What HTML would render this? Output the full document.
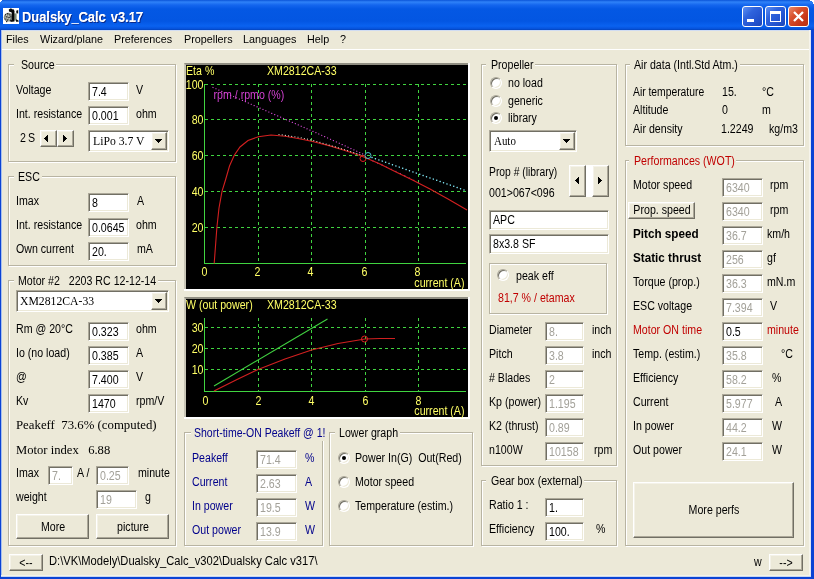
<!DOCTYPE html>
<html><head><meta charset="utf-8"><title>Dualsky_Calc v3.17</title>
<style>
html,body{margin:0;padding:0;font-family:"Liberation Sans",sans-serif}
body{width:814px;height:579px;overflow:hidden;background:#ece9d8;position:relative;font-family:"Liberation Sans",sans-serif}
#w{will-change:transform;position:absolute;left:0;top:0;width:814px;height:579px;overflow:hidden;background:#ece9d8}
.t{position:absolute;white-space:pre;transform-origin:0 0;font-size:12px;line-height:14px}
.s{font-family:"Liberation Sans",sans-serif}
.f{font-family:"Liberation Serif",serif}
.c{text-align:center;transform-origin:50% 0}
.in{position:absolute;box-sizing:border-box;background:#fff;border:1px solid;border-color:#aca899 #fff #fff #aca899;box-shadow:inset 1px 1px 0 #716f64,inset -1px -1px 0 #ece9d8}
.b{position:absolute;box-sizing:border-box;background:#ece9d8;border:1px solid;border-color:#fff #716f64 #716f64 #fff;box-shadow:inset -1px -1px 0 #aca899,inset 1px 1px 0 #f4f2e8}
.g{position:absolute;border:1px solid #b8b4a2;box-shadow:1px 1px 0 #fff,inset 1px 1px 0 #fff}
.gl{position:absolute;background:#ece9d8}
.r{position:absolute;width:12px;height:12px;border-radius:50%;background:#fff;box-sizing:border-box;border:1px solid;border-color:#aca899 #fff #fff #aca899;box-shadow:inset 1px 1px 0 #716f64,inset -1px -1px 0 #ece9d8}
.r i{position:absolute;left:3px;top:3px;width:4px;height:4px;border-radius:50%;background:#000}
.a{position:absolute}
svg{position:absolute;overflow:visible}
</style></head><body><div id="w">

<div style="position:absolute;left:0;top:0;width:814px;height:30px;background:linear-gradient(#0a54d8 0,#2f82f8 2px,#1466ee 5px,#0458e4 9px,#0356e2 21px,#0a62f0 26px,#0654de 28.5px,#0444bc 30px)"></div>
<div style="position:absolute;left:0;top:30px;width:814px;height:1px;background:#d0dcf2"></div>
<div style="position:absolute;left:0;top:31px;width:814px;height:18px;background:#ece9d8"></div>
<div style="position:absolute;left:0;top:49px;width:814px;height:1px;background:#fff"></div>

<svg style="left:3px;top:8px" width="16" height="16" viewBox="0 0 16 16"><rect width="16" height="16" fill="#fff"/>
<circle cx="5.3" cy="9.3" r="4.5" fill="#8d9288"/>
<g fill="#2c2c2c"><rect x="2" y="6" width="1.2" height="1.2"/><rect x="4" y="5" width="1.3" height="1.3"/><rect x="6.2" y="6.3" width="1.2" height="1.2"/><rect x="3" y="8.4" width="1.2" height="1.2"/><rect x="5.4" y="9" width="1.3" height="1.3"/><rect x="1.6" y="10.4" width="1.2" height="1.2"/><rect x="4" y="11.3" width="1.3" height="1.3"/><rect x="6.8" y="11.6" width="1.2" height="1.2"/><rect x="3" y="13" width="1.2" height="1.2"/><rect x="7.3" y="8.2" width="1.1" height="1.1"/></g>
<g fill="#e4e6e0"><rect x="3" y="6.6" width="1" height="1"/><rect x="5.2" y="7.4" width="1.1" height="1.1"/><rect x="2.4" y="9.4" width="1" height="1"/><rect x="4.4" y="10.2" width="1" height="1"/><rect x="6" y="10.4" width="1" height="1"/><rect x="5.2" y="12.6" width="1" height="1"/></g>
<rect x="11.2" y="5.4" width="2.4" height="7.2" fill="#7d8975"/>
<path d="M5.8 1.6L8 0.2L9.2 1.2L11 1.4L11.2 4.2L8.8 4.4L6 3.6z" fill="#0a0a0a"/>
<rect x="8.7" y="2.6" width="2.7" height="11" fill="#050505"/>
<rect x="7.4" y="12" width="2" height="1.8" fill="#111"/>
<path d="M13.2 2.8L15.2 2V5.6L13.4 5.2z" fill="#111"/><path d="M13 11.2L15.6 12.6V13.8H13z" fill="#111"/></svg>
<span class="t s" style="left:22px;top:8.6px;font-size:14px;line-height:17px;font-weight:bold;color:#fff;text-shadow:1px 1px 0 #0a2a8a,0.4px 0 0 #fff;transform:scaleX(0.92);word-spacing:1.5px">Dualsky_Calc v3.17</span>
<div style="position:absolute;left:0;top:0;width:2px;height:1px;background:#fff"></div><div style="position:absolute;left:810px;top:0;width:4px;height:1px;background:#fff"></div><div style="position:absolute;left:812px;top:1px;width:2px;height:1px;background:#fff"></div><div style="position:absolute;left:813px;top:2px;width:1px;height:2px;background:#fff"></div><div style="position:absolute;left:0;top:1px;width:1px;height:1px;background:#fff"></div>
<div style="position:absolute;left:742px;top:6px;width:21px;height:21px;box-sizing:border-box;border:1px solid #fff;border-radius:3px;background:linear-gradient(135deg,#5f91f2 0,#2f63dd 35%,#2353cf 70%,#1b45b8 100%)"></div>
<div style="position:absolute;left:747px;top:19px;width:7px;height:3px;background:#fff"></div>
<div style="position:absolute;left:765px;top:6px;width:21px;height:21px;box-sizing:border-box;border:1px solid #fff;border-radius:3px;background:linear-gradient(135deg,#5f91f2 0,#2f63dd 35%,#2353cf 70%,#1b45b8 100%)"></div>
<div style="position:absolute;left:770px;top:11px;width:11px;height:11px;box-sizing:border-box;border:1px solid #fff;border-top-width:3px"></div>
<div style="position:absolute;left:788px;top:6px;width:21px;height:21px;box-sizing:border-box;border:1px solid #fff;border-radius:3px;background:linear-gradient(135deg,#ea8a6c 0,#d9512e 35%,#c8371a 70%,#b8300f 100%)"></div>
<svg style="left:788px;top:6px" width="21" height="21"><path d="M6 6L15 15M15 6L6 15" stroke="#fff" stroke-width="2.3" stroke-linecap="butt"/></svg>
<span class="t s " style="top:32.69px;font-size:11px;line-height:13px;color:#000;left:6.00px;transform:scaleX(0.98);">Files</span>
<span class="t s " style="top:32.69px;font-size:11px;line-height:13px;color:#000;left:39.50px;transform:scaleX(0.98);">Wizard/plane</span>
<span class="t s " style="top:32.69px;font-size:11px;line-height:13px;color:#000;left:114.00px;transform:scaleX(0.98);">Preferences</span>
<span class="t s " style="top:32.69px;font-size:11px;line-height:13px;color:#000;left:184.00px;transform:scaleX(0.98);">Propellers</span>
<span class="t s " style="top:32.69px;font-size:11px;line-height:13px;color:#000;left:243.00px;transform:scaleX(0.98);">Languages</span>
<span class="t s " style="top:32.69px;font-size:11px;line-height:13px;color:#000;left:307.00px;transform:scaleX(0.98);">Help</span>
<span class="t s " style="top:32.69px;font-size:11px;line-height:13px;color:#000;left:340.00px;transform:scaleX(0.98);">?</span>
<div class="g" style="left:8px;top:64px;width:166px;height:96px"></div>
<div class="gl" style="left:14px;top:58px;width:42.2px;height:14px"></div>
<span class="t s " style="top:58.34px;font-size:12px;line-height:14px;color:#000;left:20.50px;transform:scaleX(0.885);">Source</span>
<span class="t s " style="top:82.84px;font-size:12px;line-height:14px;color:#000;left:16.00px;transform:scaleX(0.885);">Voltage</span>
<div class="in" style="left:88px;top:82px;width:41px;height:19px"></div>
<span class="t s " style="top:84.84px;font-size:12px;line-height:14px;color:#000;left:92.00px;transform:scaleX(0.885);">7.4</span>
<span class="t s " style="top:82.84px;font-size:12px;line-height:14px;color:#000;left:136.00px;transform:scaleX(0.885);">V</span>
<span class="t s " style="top:106.84px;font-size:12px;line-height:14px;color:#000;left:16.00px;transform:scaleX(0.885);">Int. resistance</span>
<div class="in" style="left:88px;top:106px;width:41px;height:19px"></div>
<span class="t s " style="top:108.84px;font-size:12px;line-height:14px;color:#000;left:92.00px;transform:scaleX(0.885);">0.001</span>
<span class="t s " style="top:106.84px;font-size:12px;line-height:14px;color:#000;left:136.00px;transform:scaleX(0.885);">ohm</span>
<span class="t s " style="top:130.84px;font-size:12px;line-height:14px;color:#000;left:19.50px;transform:scaleX(0.885);">2</span>
<span class="t s " style="top:130.84px;font-size:12px;line-height:14px;color:#000;left:28.00px;transform:scaleX(0.885);">S</span>
<div class="b" style="left:40px;top:130px;width:17px;height:17px"></div>
<div class="b" style="left:57px;top:130px;width:17px;height:17px"></div>
<svg style="left:40px;top:130px" width="34" height="17"><g fill="#000" shape-rendering="crispEdges"><rect x="4" y="8" width="1" height="1"/><rect x="5" y="7" width="1" height="3"/><rect x="6" y="6" width="1" height="5"/><rect x="7" y="5" width="1" height="7"/></g><g fill="#000" shape-rendering="crispEdges"><rect x="23" y="5" width="1" height="7"/><rect x="24" y="6" width="1" height="5"/><rect x="25" y="7" width="1" height="3"/><rect x="26" y="8" width="1" height="1"/></g></svg>
<div class="in" style="left:88px;top:130px;width:81px;height:22px"></div>
<div class="b" style="left:151px;top:132px;width:16px;height:18px"></div>
<svg class="a" style="left:151px;top:132px" width="16" height="18"><g fill="#000" shape-rendering="crispEdges"><rect x="4" y="7" width="7" height="1"/><rect x="5" y="8" width="5" height="1"/><rect x="6" y="9" width="3" height="1"/><rect x="7" y="10" width="1" height="1"/></g></svg>
<span class="t f " style="top:133.00px;font-size:13px;line-height:15px;color:#000;left:93.00px;transform:scaleX(0.9);">LiPo 3.7 V</span>
<div class="g" style="left:8px;top:176px;width:166px;height:88px"></div>
<div class="gl" style="left:13.5px;top:170px;width:28.3px;height:14px"></div>
<span class="t s " style="top:170.34px;font-size:12px;line-height:14px;color:#000;left:18.00px;transform:scaleX(0.885);">ESC</span>
<span class="t s " style="top:193.84px;font-size:12px;line-height:14px;color:#000;left:16.00px;transform:scaleX(0.885);">Imax</span>
<div class="in" style="left:88px;top:193px;width:41px;height:19px"></div>
<span class="t s " style="top:195.84px;font-size:12px;line-height:14px;color:#000;left:92.00px;transform:scaleX(0.885);">8</span>
<span class="t s " style="top:193.84px;font-size:12px;line-height:14px;color:#000;left:137.00px;transform:scaleX(0.885);">A</span>
<span class="t s " style="top:217.84px;font-size:12px;line-height:14px;color:#000;left:16.00px;transform:scaleX(0.885);">Int. resistance</span>
<div class="in" style="left:88px;top:218px;width:41px;height:19px"></div>
<span class="t s " style="top:220.84px;font-size:12px;line-height:14px;color:#000;left:92.00px;transform:scaleX(0.885);">0.0645</span>
<span class="t s " style="top:217.84px;font-size:12px;line-height:14px;color:#000;left:136.00px;transform:scaleX(0.885);">ohm</span>
<span class="t s " style="top:241.84px;font-size:12px;line-height:14px;color:#000;left:16.00px;transform:scaleX(0.885);">Own current</span>
<div class="in" style="left:88px;top:242px;width:41px;height:19px"></div>
<span class="t s " style="top:244.84px;font-size:12px;line-height:14px;color:#000;left:92.00px;transform:scaleX(0.885);">20.</span>
<span class="t s " style="top:241.84px;font-size:12px;line-height:14px;color:#000;left:137.00px;transform:scaleX(0.885);">mA</span>
<div class="g" style="left:8px;top:280px;width:166px;height:264px"></div>
<div class="gl" style="left:13.5px;top:274px;width:144.7px;height:14px"></div>
<span class="t s " style="top:274.34px;font-size:12px;line-height:14px;color:#000;left:18.00px;transform:scaleX(0.885);">Motor #2   2203 RC 12-12-14</span>
<div class="in" style="left:16px;top:290px;width:153px;height:22px"></div>
<div class="b" style="left:151px;top:292px;width:16px;height:18px"></div>
<svg class="a" style="left:151px;top:292px" width="16" height="18"><g fill="#000" shape-rendering="crispEdges"><rect x="4" y="7" width="7" height="1"/><rect x="5" y="8" width="5" height="1"/><rect x="6" y="9" width="3" height="1"/><rect x="7" y="10" width="1" height="1"/></g></svg>
<span class="t f " style="top:293.00px;font-size:13px;line-height:15px;color:#000;left:19.50px;transform:scaleX(0.9);">XM2812CA-33</span>
<span class="t s " style="top:321.84px;font-size:12px;line-height:14px;color:#000;left:16.00px;transform:scaleX(0.885);">Rm @ 20°C</span>
<div class="in" style="left:88px;top:322px;width:41px;height:19px"></div>
<span class="t s " style="top:324.84px;font-size:12px;line-height:14px;color:#000;left:92.00px;transform:scaleX(0.885);">0.323</span>
<span class="t s " style="top:321.84px;font-size:12px;line-height:14px;color:#000;left:136.00px;transform:scaleX(0.885);">ohm</span>
<span class="t s " style="top:345.84px;font-size:12px;line-height:14px;color:#000;left:16.00px;transform:scaleX(0.885);">Io (no load)</span>
<div class="in" style="left:88px;top:346px;width:41px;height:19px"></div>
<span class="t s " style="top:348.84px;font-size:12px;line-height:14px;color:#000;left:92.00px;transform:scaleX(0.885);">0.385</span>
<span class="t s " style="top:345.84px;font-size:12px;line-height:14px;color:#000;left:136.00px;transform:scaleX(0.885);">A</span>
<span class="t s " style="top:369.84px;font-size:12px;line-height:14px;color:#000;left:16.00px;transform:scaleX(0.885);">@</span>
<div class="in" style="left:88px;top:370px;width:41px;height:19px"></div>
<span class="t s " style="top:372.84px;font-size:12px;line-height:14px;color:#000;left:92.00px;transform:scaleX(0.885);">7.400</span>
<span class="t s " style="top:369.84px;font-size:12px;line-height:14px;color:#000;left:136.00px;transform:scaleX(0.885);">V</span>
<span class="t s " style="top:393.84px;font-size:12px;line-height:14px;color:#000;left:16.00px;transform:scaleX(0.885);">Kv</span>
<div class="in" style="left:88px;top:394px;width:41px;height:19px"></div>
<span class="t s " style="top:396.84px;font-size:12px;line-height:14px;color:#000;left:92.00px;transform:scaleX(0.885);">1470</span>
<span class="t s " style="top:393.84px;font-size:12px;line-height:14px;color:#000;left:136.00px;transform:scaleX(0.885);">rpm/V</span>
<span class="t f " style="top:417.00px;font-size:13px;line-height:15px;color:#000;left:16.00px;transform:scaleX(0.985);">Peakeff  73.6% (computed)</span>
<span class="t f " style="top:442.00px;font-size:13px;line-height:15px;color:#000;left:16.00px;transform:scaleX(0.97);">Motor index   6.88</span>
<span class="t s " style="top:465.84px;font-size:12px;line-height:14px;color:#000;left:16.00px;transform:scaleX(0.885);">Imax</span>
<div class="in" style="left:48px;top:466px;width:25px;height:19px"></div>
<span class="t s " style="top:468.84px;font-size:12px;line-height:14px;color:#a3a199;left:52.00px;transform:scaleX(0.885);">7.</span>
<span class="t s " style="top:465.84px;font-size:12px;line-height:14px;color:#000;left:76.50px;transform:scaleX(0.885);">A /</span>
<div class="in" style="left:96px;top:466px;width:33px;height:19px"></div>
<span class="t s " style="top:468.84px;font-size:12px;line-height:14px;color:#a3a199;left:100.00px;transform:scaleX(0.885);">0.25</span>
<span class="t s " style="top:465.84px;font-size:12px;line-height:14px;color:#000;left:137.50px;transform:scaleX(0.885);">minute</span>
<span class="t s " style="top:489.84px;font-size:12px;line-height:14px;color:#000;left:16.00px;transform:scaleX(0.885);">weight</span>
<div class="in" style="left:96px;top:490px;width:41px;height:19px"></div>
<span class="t s " style="top:492.84px;font-size:12px;line-height:14px;color:#a3a199;left:100.00px;transform:scaleX(0.885);">19</span>
<span class="t s " style="top:489.84px;font-size:12px;line-height:14px;color:#000;left:144.50px;transform:scaleX(0.885);">g</span>
<div class="b" style="left:16px;top:514px;width:73px;height:25px"></div>
<span class="t s c" style="left:-47.50px;width:200px;top:519.65px;transform:scaleX(0.885)">More</span>
<div class="b" style="left:96px;top:514px;width:73px;height:25px"></div>
<span class="t s c" style="left:32.50px;width:200px;top:519.65px;transform:scaleX(0.885)">picture</span>
<div class="b" style="left:9px;top:554px;width:34px;height:17px"></div>
<span class="t s c" style="left:-74.00px;width:200px;top:555.65px;transform:scaleX(0.885)">&lt;--</span>
<span class="t s " style="top:554.34px;font-size:12px;line-height:14px;color:#000;left:48.80px;transform:scaleX(0.93);">D:\VK\Modely\Dualsky_Calc_v302\Dualsky Calc v317\</span>
<span class="t s " style="top:554.84px;font-size:12px;line-height:14px;color:#000;left:754.00px;transform:scaleX(0.885);">w</span>
<div class="b" style="left:769px;top:554px;width:34px;height:17px"></div>
<span class="t s c" style="left:686.00px;width:200px;top:555.65px;transform:scaleX(0.885)">--&gt;</span>
<div class="g" style="left:184px;top:432px;width:137px;height:112px"></div>
<div class="gl" style="left:191px;top:427px;width:136px;height:14px"></div>
<span class="t s " style="top:426.34px;font-size:12px;line-height:14px;color:#00008b;left:193.50px;transform:scaleX(0.876);">Short-time-ON Peakeff @ 1!</span>
<span class="t s " style="top:450.84px;font-size:12px;line-height:14px;color:#00008b;left:192.00px;transform:scaleX(0.885);">Peakeff</span>
<div class="in" style="left:256px;top:450px;width:41px;height:19px"></div>
<span class="t s " style="top:452.84px;font-size:12px;line-height:14px;color:#a3a199;left:260.00px;transform:scaleX(0.885);">71.4</span>
<span class="t s " style="top:450.84px;font-size:12px;line-height:14px;color:#00008b;left:305.00px;transform:scaleX(0.885);">%</span>
<span class="t s " style="top:474.84px;font-size:12px;line-height:14px;color:#00008b;left:192.00px;transform:scaleX(0.885);">Current</span>
<div class="in" style="left:256px;top:474px;width:41px;height:19px"></div>
<span class="t s " style="top:476.84px;font-size:12px;line-height:14px;color:#a3a199;left:260.00px;transform:scaleX(0.885);">2.63</span>
<span class="t s " style="top:474.84px;font-size:12px;line-height:14px;color:#00008b;left:305.00px;transform:scaleX(0.885);">A</span>
<span class="t s " style="top:498.84px;font-size:12px;line-height:14px;color:#00008b;left:192.00px;transform:scaleX(0.885);">In power</span>
<div class="in" style="left:256px;top:498px;width:41px;height:19px"></div>
<span class="t s " style="top:500.84px;font-size:12px;line-height:14px;color:#a3a199;left:260.00px;transform:scaleX(0.885);">19.5</span>
<span class="t s " style="top:498.84px;font-size:12px;line-height:14px;color:#00008b;left:305.00px;transform:scaleX(0.885);">W</span>
<span class="t s " style="top:522.84px;font-size:12px;line-height:14px;color:#00008b;left:192.00px;transform:scaleX(0.885);">Out power</span>
<div class="in" style="left:256px;top:522px;width:41px;height:19px"></div>
<span class="t s " style="top:524.84px;font-size:12px;line-height:14px;color:#a3a199;left:260.00px;transform:scaleX(0.885);">13.9</span>
<span class="t s " style="top:522.84px;font-size:12px;line-height:14px;color:#00008b;left:305.00px;transform:scaleX(0.885);">W</span>
<div class="g" style="left:329px;top:432px;width:142px;height:112px"></div>
<div class="gl" style="left:334.5px;top:426px;width:65.6px;height:14px"></div>
<span class="t s " style="top:426.34px;font-size:12px;line-height:14px;color:#000;left:339.00px;transform:scaleX(0.885);">Lower graph</span>
<div class="r" style="left:338px;top:452px"><i></i></div>
<span class="t s " style="top:451.34px;font-size:12px;line-height:14px;color:#000;left:355.00px;transform:scaleX(0.885);">Power In(G)  Out(Red)</span>
<div class="r" style="left:338px;top:476px"></div>
<span class="t s " style="top:475.34px;font-size:12px;line-height:14px;color:#000;left:355.00px;transform:scaleX(0.885);">Motor speed</span>
<div class="r" style="left:338px;top:500px"></div>
<span class="t s " style="top:499.34px;font-size:12px;line-height:14px;color:#000;left:355.00px;transform:scaleX(0.885);">Temperature (estim.)</span>
<div class="g" style="left:481px;top:64px;width:134px;height:400px"></div>
<div class="gl" style="left:486px;top:58px;width:49.0px;height:14px"></div>
<span class="t s " style="top:58.34px;font-size:12px;line-height:14px;color:#000;left:490.50px;transform:scaleX(0.885);">Propeller</span>
<div class="r" style="left:490px;top:77px"></div>
<span class="t s " style="top:75.84px;font-size:12px;line-height:14px;color:#000;left:507.50px;transform:scaleX(0.885);">no load</span>
<div class="r" style="left:490px;top:95px"></div>
<span class="t s " style="top:93.84px;font-size:12px;line-height:14px;color:#000;left:507.50px;transform:scaleX(0.885);">generic</span>
<div class="r" style="left:490px;top:112px"><i></i></div>
<span class="t s " style="top:110.84px;font-size:12px;line-height:14px;color:#000;left:507.50px;transform:scaleX(0.885);">library</span>
<div class="in" style="left:489px;top:130px;width:88px;height:22px"></div>
<div class="b" style="left:559px;top:132px;width:16px;height:18px"></div>
<svg class="a" style="left:559px;top:132px" width="16" height="18"><g fill="#000" shape-rendering="crispEdges"><rect x="4" y="7" width="7" height="1"/><rect x="5" y="8" width="5" height="1"/><rect x="6" y="9" width="3" height="1"/><rect x="7" y="10" width="1" height="1"/></g></svg>
<span class="t f " style="top:133.00px;font-size:13px;line-height:15px;color:#000;left:494.00px;transform:scaleX(0.84);">Auto</span>
<span class="t s " style="top:164.84px;font-size:12px;line-height:14px;color:#000;left:489.00px;transform:scaleX(0.86);">Prop # (library)</span>
<span class="t s " style="top:185.84px;font-size:12px;line-height:14px;color:#000;left:489.00px;transform:scaleX(0.885);">001&gt;067&lt;096</span>
<div style="position:absolute;left:585px;top:165px;width:8px;height:32px;background:#fff"></div>
<div class="b" style="left:569px;top:165px;width:17px;height:32px"></div>
<div class="b" style="left:592px;top:165px;width:17px;height:32px"></div>
<svg style="left:569px;top:165px" width="40" height="32"><g fill="#000" shape-rendering="crispEdges"><rect x="6" y="15" width="1" height="1"/><rect x="7" y="14" width="1" height="3"/><rect x="8" y="13" width="1" height="5"/><rect x="9" y="12" width="1" height="7"/></g><g fill="#000" shape-rendering="crispEdges"><rect x="29" y="12" width="1" height="7"/><rect x="30" y="13" width="1" height="5"/><rect x="31" y="14" width="1" height="3"/><rect x="32" y="15" width="1" height="1"/></g></svg>
<div class="in" style="left:489px;top:210px;width:120px;height:20px"></div>
<span class="t s " style="top:212.84px;font-size:12px;line-height:14px;color:#000;left:493.00px;transform:scaleX(0.885);">APC</span>
<div class="in" style="left:489px;top:234px;width:120px;height:20px"></div>
<span class="t s " style="top:236.84px;font-size:12px;line-height:14px;color:#000;left:493.00px;transform:scaleX(0.885);">8x3.8 SF</span>
<div class="g" style="left:489px;top:263px;width:116px;height:49px"></div>
<div class="r" style="left:497px;top:269px"></div>
<span class="t s " style="top:268.84px;font-size:12px;line-height:14px;color:#000;left:515.50px;transform:scaleX(0.885);">peak eff</span>
<span class="t s " style="top:290.84px;font-size:12px;line-height:14px;color:#c00000;left:497.50px;transform:scaleX(0.885);">81,7 % / etamax</span>
<span class="t s " style="top:322.84px;font-size:12px;line-height:14px;color:#000;left:489.00px;transform:scaleX(0.885);">Diameter</span>
<div class="in" style="left:545px;top:322px;width:39px;height:19px"></div>
<span class="t s " style="top:324.84px;font-size:12px;line-height:14px;color:#a3a199;left:549.00px;transform:scaleX(0.885);">8.</span>
<span class="t s " style="top:322.84px;font-size:12px;line-height:14px;color:#000;left:591.50px;transform:scaleX(0.885);">inch</span>
<span class="t s " style="top:346.84px;font-size:12px;line-height:14px;color:#000;left:489.00px;transform:scaleX(0.885);">Pitch</span>
<div class="in" style="left:545px;top:346px;width:39px;height:19px"></div>
<span class="t s " style="top:348.84px;font-size:12px;line-height:14px;color:#a3a199;left:549.00px;transform:scaleX(0.885);">3.8</span>
<span class="t s " style="top:346.84px;font-size:12px;line-height:14px;color:#000;left:591.50px;transform:scaleX(0.885);">inch</span>
<span class="t s " style="top:370.84px;font-size:12px;line-height:14px;color:#000;left:489.00px;transform:scaleX(0.885);"># Blades</span>
<div class="in" style="left:545px;top:370px;width:39px;height:19px"></div>
<span class="t s " style="top:372.84px;font-size:12px;line-height:14px;color:#a3a199;left:549.00px;transform:scaleX(0.885);">2</span>
<span class="t s " style="top:394.84px;font-size:12px;line-height:14px;color:#000;left:489.00px;transform:scaleX(0.885);">Kp (power)</span>
<div class="in" style="left:545px;top:394px;width:39px;height:19px"></div>
<span class="t s " style="top:396.84px;font-size:12px;line-height:14px;color:#a3a199;left:549.00px;transform:scaleX(0.885);">1.195</span>
<span class="t s " style="top:418.84px;font-size:12px;line-height:14px;color:#000;left:489.00px;transform:scaleX(0.885);">K2 (thrust)</span>
<div class="in" style="left:545px;top:418px;width:39px;height:19px"></div>
<span class="t s " style="top:420.84px;font-size:12px;line-height:14px;color:#a3a199;left:549.00px;transform:scaleX(0.885);">0.89</span>
<span class="t s " style="top:442.84px;font-size:12px;line-height:14px;color:#000;left:489.00px;transform:scaleX(0.885);">n100W</span>
<div class="in" style="left:545px;top:442px;width:39px;height:19px"></div>
<span class="t s " style="top:444.84px;font-size:12px;line-height:14px;color:#a3a199;left:549.00px;transform:scaleX(0.885);">10158</span>
<span class="t s " style="top:442.84px;font-size:12px;line-height:14px;color:#000;left:593.50px;transform:scaleX(0.885);">rpm</span>
<div class="g" style="left:481px;top:480px;width:134px;height:64px"></div>
<div class="gl" style="left:486px;top:474px;width:98.0px;height:14px"></div>
<span class="t s " style="top:474.34px;font-size:12px;line-height:14px;color:#000;left:490.50px;transform:scaleX(0.885);">Gear box (external)</span>
<span class="t s " style="top:497.84px;font-size:12px;line-height:14px;color:#000;left:489.00px;transform:scaleX(0.885);">Ratio 1 :</span>
<div class="in" style="left:545px;top:498px;width:39px;height:19px"></div>
<span class="t s " style="top:500.84px;font-size:12px;line-height:14px;color:#000;left:549.00px;transform:scaleX(0.885);">1.</span>
<span class="t s " style="top:521.84px;font-size:12px;line-height:14px;color:#000;left:489.00px;transform:scaleX(0.885);">Efficiency</span>
<div class="in" style="left:545px;top:522px;width:39px;height:19px"></div>
<span class="t s " style="top:524.84px;font-size:12px;line-height:14px;color:#000;left:549.00px;transform:scaleX(0.885);">100.</span>
<span class="t s " style="top:521.84px;font-size:12px;line-height:14px;color:#000;left:595.50px;transform:scaleX(0.885);">%</span>
<div class="g" style="left:625px;top:64px;width:177px;height:80px"></div>
<div class="gl" style="left:629.5px;top:58px;width:110.4px;height:14px"></div>
<span class="t s " style="top:58.34px;font-size:12px;line-height:14px;color:#000;left:634.00px;transform:scaleX(0.885);">Air data (Intl.Std Atm.)</span>
<span class="t s " style="top:84.84px;font-size:12px;line-height:14px;color:#000;left:633.00px;transform:scaleX(0.86);">Air temperature</span>
<span class="t s " style="top:84.84px;font-size:12px;line-height:14px;color:#000;left:721.50px;transform:scaleX(0.885);">15.</span>
<span class="t s " style="top:84.84px;font-size:12px;line-height:14px;color:#000;left:761.50px;transform:scaleX(0.885);">°C</span>
<span class="t s " style="top:103.34px;font-size:12px;line-height:14px;color:#000;left:633.00px;transform:scaleX(0.885);">Altitude</span>
<span class="t s " style="top:103.34px;font-size:12px;line-height:14px;color:#000;left:721.50px;transform:scaleX(0.885);">0</span>
<span class="t s " style="top:103.34px;font-size:12px;line-height:14px;color:#000;left:762.00px;transform:scaleX(0.885);">m</span>
<span class="t s " style="top:122.34px;font-size:12px;line-height:14px;color:#000;left:633.00px;transform:scaleX(0.885);">Air density</span>
<span class="t s " style="top:122.34px;font-size:12px;line-height:14px;color:#000;left:721.00px;transform:scaleX(0.885);">1.2249</span>
<span class="t s " style="top:122.34px;font-size:12px;line-height:14px;color:#000;left:768.50px;transform:scaleX(0.885);">kg/m3</span>
<div class="g" style="left:625px;top:160px;width:177px;height:384px"></div>
<div class="gl" style="left:629px;top:154px;width:107.4px;height:14px"></div>
<span class="t s " style="top:154.34px;font-size:12px;line-height:14px;color:#c00000;left:633.50px;transform:scaleX(0.885);">Performances (WOT)</span>
<span class="t s " style="top:178.24px;font-size:12px;line-height:14px;color:#000;left:633.00px;transform:scaleX(0.885);">Motor speed</span>
<div class="in" style="left:722px;top:178px;width:41px;height:19px"></div>
<span class="t s " style="top:180.84px;font-size:12px;line-height:14px;color:#a3a199;left:726.00px;transform:scaleX(0.885);">6340</span>
<span class="t s " style="top:178.24px;font-size:12px;line-height:14px;color:#000;left:770.00px;transform:scaleX(0.885);">rpm</span>
<div class="in" style="left:722px;top:202px;width:41px;height:19px"></div>
<span class="t s " style="top:204.84px;font-size:12px;line-height:14px;color:#a3a199;left:726.00px;transform:scaleX(0.885);">6340</span>
<span class="t s " style="top:202.84px;font-size:12px;line-height:14px;color:#000;left:770.00px;transform:scaleX(0.885);">rpm</span>
<span class="t s " style="top:225.50px;font-size:13px;line-height:15px;color:#000;font-weight:bold;left:633.00px;transform:scaleX(0.9);">Pitch speed</span>
<div class="in" style="left:722px;top:226px;width:41px;height:19px"></div>
<span class="t s " style="top:228.84px;font-size:12px;line-height:14px;color:#a3a199;left:726.00px;transform:scaleX(0.885);">36.7</span>
<span class="t s " style="top:226.84px;font-size:12px;line-height:14px;color:#000;left:767.00px;transform:scaleX(0.885);">km/h</span>
<span class="t s " style="top:249.50px;font-size:13px;line-height:15px;color:#000;font-weight:bold;left:633.00px;transform:scaleX(0.9);">Static thrust</span>
<div class="in" style="left:722px;top:250px;width:41px;height:19px"></div>
<span class="t s " style="top:252.84px;font-size:12px;line-height:14px;color:#a3a199;left:726.00px;transform:scaleX(0.885);">256</span>
<span class="t s " style="top:250.84px;font-size:12px;line-height:14px;color:#000;left:767.00px;transform:scaleX(0.885);">gf</span>
<span class="t s " style="top:274.84px;font-size:12px;line-height:14px;color:#000;left:633.00px;transform:scaleX(0.885);">Torque (prop.)</span>
<div class="in" style="left:722px;top:274px;width:41px;height:19px"></div>
<span class="t s " style="top:276.84px;font-size:12px;line-height:14px;color:#a3a199;left:726.00px;transform:scaleX(0.885);">36.3</span>
<span class="t s " style="top:274.84px;font-size:12px;line-height:14px;color:#000;left:767.00px;transform:scaleX(0.885);">mN.m</span>
<span class="t s " style="top:298.84px;font-size:12px;line-height:14px;color:#000;left:633.00px;transform:scaleX(0.885);">ESC voltage</span>
<div class="in" style="left:722px;top:298px;width:41px;height:19px"></div>
<span class="t s " style="top:300.84px;font-size:12px;line-height:14px;color:#a3a199;left:726.00px;transform:scaleX(0.885);">7.394</span>
<span class="t s " style="top:298.84px;font-size:12px;line-height:14px;color:#000;left:770.00px;transform:scaleX(0.885);">V</span>
<span class="t s " style="top:322.84px;font-size:12px;line-height:14px;color:#c00000;left:633.00px;transform:scaleX(0.885);">Motor ON time</span>
<div class="in" style="left:722px;top:322px;width:41px;height:19px"></div>
<span class="t s " style="top:324.84px;font-size:12px;line-height:14px;color:#000;left:726.00px;transform:scaleX(0.885);">0.5</span>
<span class="t s " style="top:322.84px;font-size:12px;line-height:14px;color:#c00000;left:767.00px;transform:scaleX(0.885);">minute</span>
<span class="t s " style="top:346.84px;font-size:12px;line-height:14px;color:#000;left:633.00px;transform:scaleX(0.885);">Temp. (estim.)</span>
<div class="in" style="left:722px;top:346px;width:41px;height:19px"></div>
<span class="t s " style="top:348.84px;font-size:12px;line-height:14px;color:#a3a199;left:726.00px;transform:scaleX(0.885);">35.8</span>
<span class="t s " style="top:346.84px;font-size:12px;line-height:14px;color:#000;left:780.50px;transform:scaleX(0.885);">°C</span>
<span class="t s " style="top:370.84px;font-size:12px;line-height:14px;color:#000;left:633.00px;transform:scaleX(0.885);">Efficiency</span>
<div class="in" style="left:722px;top:370px;width:41px;height:19px"></div>
<span class="t s " style="top:372.84px;font-size:12px;line-height:14px;color:#a3a199;left:726.00px;transform:scaleX(0.885);">58.2</span>
<span class="t s " style="top:370.84px;font-size:12px;line-height:14px;color:#000;left:772.00px;transform:scaleX(0.885);">%</span>
<span class="t s " style="top:394.84px;font-size:12px;line-height:14px;color:#000;left:633.00px;transform:scaleX(0.885);">Current</span>
<div class="in" style="left:722px;top:394px;width:41px;height:19px"></div>
<span class="t s " style="top:396.84px;font-size:12px;line-height:14px;color:#a3a199;left:726.00px;transform:scaleX(0.885);">5.977</span>
<span class="t s " style="top:394.84px;font-size:12px;line-height:14px;color:#000;left:774.50px;transform:scaleX(0.885);">A</span>
<span class="t s " style="top:419.24px;font-size:12px;line-height:14px;color:#000;left:633.00px;transform:scaleX(0.885);">In power</span>
<div class="in" style="left:722px;top:418px;width:41px;height:19px"></div>
<span class="t s " style="top:420.84px;font-size:12px;line-height:14px;color:#a3a199;left:726.00px;transform:scaleX(0.885);">44.2</span>
<span class="t s " style="top:419.14px;font-size:12px;line-height:14px;color:#000;left:772.00px;transform:scaleX(0.885);">W</span>
<span class="t s " style="top:442.84px;font-size:12px;line-height:14px;color:#000;left:633.00px;transform:scaleX(0.885);">Out power</span>
<div class="in" style="left:722px;top:442px;width:41px;height:19px"></div>
<span class="t s " style="top:444.84px;font-size:12px;line-height:14px;color:#a3a199;left:726.00px;transform:scaleX(0.885);">24.1</span>
<span class="t s " style="top:442.84px;font-size:12px;line-height:14px;color:#000;left:772.00px;transform:scaleX(0.885);">W</span>
<div class="b" style="left:628px;top:202px;width:67px;height:17px"></div>
<span class="t s c" style="left:561.50px;width:200px;top:202.85px;transform:scaleX(0.885)">Prop. speed</span>
<div class="b" style="left:633px;top:482px;width:161px;height:56px"></div>
<span class="t s c" style="left:613.50px;width:200px;top:503.15px;transform:scaleX(0.885)">More perfs</span>
<div style="position:absolute;left:184px;top:63px;width:286px;height:228px;background:#fff"></div><div style="position:absolute;left:184px;top:63px;width:284px;height:226px;background:#000;box-sizing:border-box;border-top:2px solid #8a887c;border-left:2px solid #c8c5b6;border-top-color:#908e82"></div>

<div style="position:absolute;left:184px;top:297px;width:286px;height:122px;background:#fff"></div><div style="position:absolute;left:184px;top:297px;width:284px;height:120px;background:#000;box-sizing:border-box;border-top:2px solid #908e82;border-left:2px solid #c8c5b6"></div>
<svg style="left:0;top:0" width="814" height="579" font-family="Liberation Sans, sans-serif">
<g shape-rendering="crispEdges" stroke="#40d440" stroke-width="1" fill="none">
<path d="M205 84.5H466" stroke-dasharray="3 3"/>
<path d="M205 119.5H466" stroke-dasharray="3 3"/>
<path d="M205 155.5H466" stroke-dasharray="3 3"/>
<path d="M205 191.5H466" stroke-dasharray="3 3"/>
<path d="M205 227.5H466" stroke-dasharray="3 3"/>
<path d="M258.5 84V263" stroke-dasharray="3 3"/>
<path d="M311.5 84V263" stroke-dasharray="3 3"/>
<path d="M365.5 84V263" stroke-dasharray="3 3"/>
<path d="M418.5 84V263" stroke-dasharray="3 3"/>
<path d="M204.5 84V264M204 263.5H466"/>
<path d="M205 327.5H466" stroke-dasharray="3 3"/>
<path d="M205 348.5H466" stroke-dasharray="3 3"/>
<path d="M205 369.5H466" stroke-dasharray="3 3"/>
<path d="M258.5 318V391" stroke-dasharray="3 3"/>
<path d="M311.5 318V391" stroke-dasharray="3 3"/>
<path d="M365.5 318V391" stroke-dasharray="3 3"/>
<path d="M418.5 318V391" stroke-dasharray="3 3"/>
<path d="M204.5 318V392M204 391.5H466"/>
</g>
<text transform="translate(186,75.2) scale(0.885,1)" text-anchor="start" fill="#ffff66" font-size="12">Eta %</text>
<text transform="translate(267,75.2) scale(0.885,1)" text-anchor="start" fill="#ffff66" font-size="12">XM2812CA-33</text>
<text transform="translate(203.5,88.5) scale(0.885,1)" text-anchor="end" fill="#ffff66" font-size="12">100</text>
<text transform="translate(203.5,123.5) scale(0.885,1)" text-anchor="end" fill="#ffff66" font-size="12">80</text>
<text transform="translate(203.5,159.5) scale(0.885,1)" text-anchor="end" fill="#ffff66" font-size="12">60</text>
<text transform="translate(203.5,195.5) scale(0.885,1)" text-anchor="end" fill="#ffff66" font-size="12">40</text>
<text transform="translate(203.5,231.5) scale(0.885,1)" text-anchor="end" fill="#ffff66" font-size="12">20</text>
<text transform="translate(204.5,276) scale(0.885,1)" text-anchor="middle" fill="#ffff66" font-size="12">0</text>
<text transform="translate(257.5,276) scale(0.885,1)" text-anchor="middle" fill="#ffff66" font-size="12">2</text>
<text transform="translate(310.5,276) scale(0.885,1)" text-anchor="middle" fill="#ffff66" font-size="12">4</text>
<text transform="translate(364.5,276) scale(0.885,1)" text-anchor="middle" fill="#ffff66" font-size="12">6</text>
<text transform="translate(417.5,276) scale(0.885,1)" text-anchor="middle" fill="#ffff66" font-size="12">8</text>
<text transform="translate(464.5,287) scale(0.885,1)" text-anchor="end" fill="#ffff66" font-size="12">current (A)</text>
<text transform="translate(213.5,99.3) scale(0.885,1)" text-anchor="start" fill="#d040d0" font-size="12">rpm / rpmo (%)</text>
<path d="M213 87.5L320 134.5L365 155" stroke="#e050e0" stroke-width="1.25" stroke-linecap="round" stroke-dasharray="0.01 3.2" fill="none"/><path d="M373 161L395 171L420 183.5" stroke="#c040c0" stroke-width="1.2" stroke-linecap="round" stroke-dasharray="0.01 5" fill="none"/>
<path d="M372 157.5L467 191" stroke="#80e8f8" stroke-width="1.5" stroke-linecap="round" stroke-dasharray="0.01 3.6" fill="none"/>
<path d="M214.2 263.5L215.2 250L216.9 227.2L219 208L222 191.4L225.5 180L229.5 166L234.3 155.3L240 147L248 140.5L258.3 136.7L271 135L285 136.2L298 138.5L311.5 141.2L329 145.6L345 150.5L357 154.5L365 157.6L380 164L395 171.5L411 179.2L430 189L448 199L467 210" stroke="#d42020" stroke-width="1.1" fill="none"/>
<path d="M279 134.5L298 137.2L311.5 140L320 142.4L340 148.3L362 155.2" stroke="#e4e0d4" stroke-width="1.2" stroke-linecap="round" stroke-dasharray="0.01 3.2" fill="none"/>
<circle cx="363" cy="158.5" r="3" stroke="#e02020" fill="none" stroke-width="1"/>
<circle cx="368" cy="155.5" r="3" stroke="#48c0c8" fill="none" stroke-width="1"/>
<text transform="translate(186,308.5) scale(0.885,1)" text-anchor="start" fill="#ffff66" font-size="12">W (out power)</text>
<text transform="translate(267,308.5) scale(0.885,1)" text-anchor="start" fill="#ffff66" font-size="12">XM2812CA-33</text>
<text transform="translate(203.5,331.5) scale(0.885,1)" text-anchor="end" fill="#ffff66" font-size="12">30</text>
<text transform="translate(203.5,352.5) scale(0.885,1)" text-anchor="end" fill="#ffff66" font-size="12">20</text>
<text transform="translate(203.5,373.5) scale(0.885,1)" text-anchor="end" fill="#ffff66" font-size="12">10</text>
<text transform="translate(205.5,404.5) scale(0.885,1)" text-anchor="middle" fill="#ffff66" font-size="12">0</text>
<text transform="translate(258.5,404.5) scale(0.885,1)" text-anchor="middle" fill="#ffff66" font-size="12">2</text>
<text transform="translate(311.5,404.5) scale(0.885,1)" text-anchor="middle" fill="#ffff66" font-size="12">4</text>
<text transform="translate(365.5,404.5) scale(0.885,1)" text-anchor="middle" fill="#ffff66" font-size="12">6</text>
<text transform="translate(418.5,404.5) scale(0.885,1)" text-anchor="middle" fill="#ffff66" font-size="12">8</text>
<text transform="translate(464.5,415) scale(0.885,1)" text-anchor="end" fill="#ffff66" font-size="12">current (A)</text>
<path d="M214 386L327.5 319" stroke="#40d040" stroke-width="1.1" fill="none"/>
<path d="M214 391L236 380L258 369.5L285 359L311.6 350L338 343.5L365 339L380 338.5L395 338.5" stroke="#d02020" stroke-width="1.2" fill="none"/>
<circle cx="364.5" cy="339" r="3" stroke="#e02020" fill="none" stroke-width="1"/>
</svg>
<div style="position:absolute;left:0;top:30px;width:1px;height:549px;background:#0b43d4"></div>
<div style="position:absolute;left:1px;top:30px;width:1px;height:547px;background:#a8c0ee"></div>
<div style="position:absolute;left:809px;top:30px;width:1px;height:546px;background:#f6f4ec"></div>
<div style="position:absolute;left:810px;top:30px;width:1px;height:547px;background:#dfe6f2"></div>
<div style="position:absolute;left:811px;top:30px;width:3px;height:549px;background:#0b43d4"></div>
<div style="position:absolute;left:1px;top:575px;width:809px;height:1px;background:#f4f2ea"></div>
<div style="position:absolute;left:1px;top:576px;width:810px;height:1px;background:#c8d8f0"></div>
<div style="position:absolute;left:0;top:577px;width:814px;height:2px;background:#0b43d4"></div>

</div></body></html>
